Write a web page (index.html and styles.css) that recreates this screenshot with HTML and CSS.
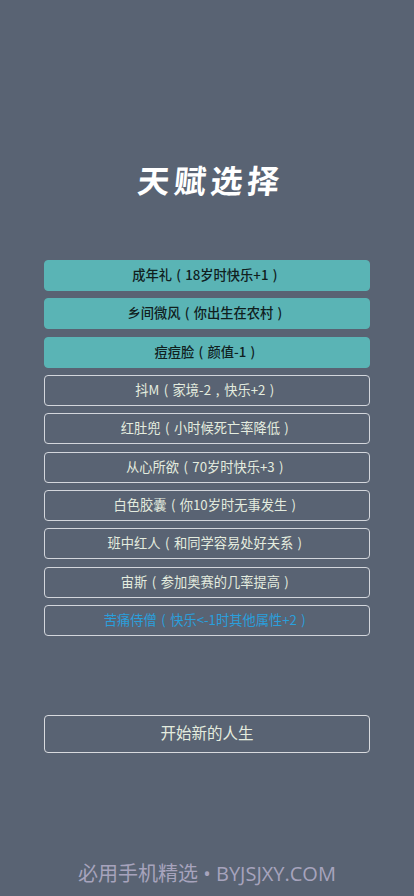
FILE: index.html
```html
<!DOCTYPE html>
<html lang="zh-Hans">
<head>
	<meta charset="utf-8">
	<title>天赋选择</title>
	<link rel="stylesheet" href="styles.css">
</head>
<body>
	<div id="page">
		<h1 id="title">天赋选择</h1>
		<ul id="talents">
			<li class="selected">成年礼<span class="mark">(</span>18岁时快乐+1<span class="mark">)</span></li>
			<li class="selected">乡间微风<span class="mark">(</span>你出生在农村<span class="mark">)</span></li>
			<li class="selected">痘痘脸<span class="mark">(</span>颜值-1<span class="mark">)</span></li>
			<li>抖M<span class="mark">(</span>家境-2<span class="mark">,</span>快乐+2<span class="mark">)</span></li>
			<li>红肚兜<span class="mark">(</span>小时候死亡率降低<span class="mark">)</span></li>
			<li>从心所欲<span class="mark">(</span>70岁时快乐+3<span class="mark">)</span></li>
			<li>白色胶囊<span class="mark">(</span>你10岁时无事发生<span class="mark">)</span></li>
			<li>班中红人<span class="mark">(</span>和同学容易处好关系<span class="mark">)</span></li>
			<li>宙斯<span class="mark">(</span>参加奥赛的几率提高<span class="mark">)</span></li>
			<li class="rare">苦痛侍僧<span class="mark">(</span>快乐&lt;-1时其他属性+2<span class="mark">)</span></li>
		</ul>
		<button id="start">开始新的人生</button>
		<div id="footer">必用手机精选 • BYJSJXY.COM</div>
	</div>
</body>
</html>
```

FILE: styles.css
```css
*{
	margin:0;
	padding:0;
	box-sizing:border-box;
}
body{
	width:414px;
	height:896px;
	overflow:hidden;
	background:#596373;
	font-family:"Noto Sans CJK SC",sans-serif;
}
#page{
	display:flex;
	flex-direction:column;
	align-items:center;
	height:896px;
	padding-top:157px;
}
#title{
	height:44px;
	font-size:32px;
	font-weight:700;
	line-height:44px;
	letter-spacing:4.5px;
	margin-right:-9px;
	margin-bottom:1px;
	color:#fff;
	transform:skewX(-6deg);
}
#talents{
	display:flex;
	flex-direction:column;
	gap:7.33px;
	width:326px;
	margin-top:58px;
	list-style:none;
}
#talents li{
	height:31px;
	line-height:27px;
	text-align:center;
	font-size:13.25px;
	color:#e4ecdf;
	border:1px solid #d3d6dc;
	border-radius:4px;
}
#talents li .mark{
	display:inline-block;
	width:1em;
	text-align:center;
}
#talents li.selected{
	color:#10201e;
	font-weight:500;
	background:#5ab4b5;
	border-color:#5ab4b5;
}
#talents li.rare{
	color:#2a9fdc;
}
#start{
	width:326px;
	height:38px;
	margin-top:79px;
	padding-bottom:3px;
	font-family:inherit;
	font-size:15.5px;
	color:#e4ecdf;
	background:none;
	border:1px solid #d8dade;
	border-radius:4px;
}
#footer{
	margin-top:auto;
	height:43px;
	font-family:"Open Sans","Noto Sans CJK SC",sans-serif;
	font-size:20px;
	line-height:42px;
	color:#a7a3bd;
	white-space:nowrap;
}
```
